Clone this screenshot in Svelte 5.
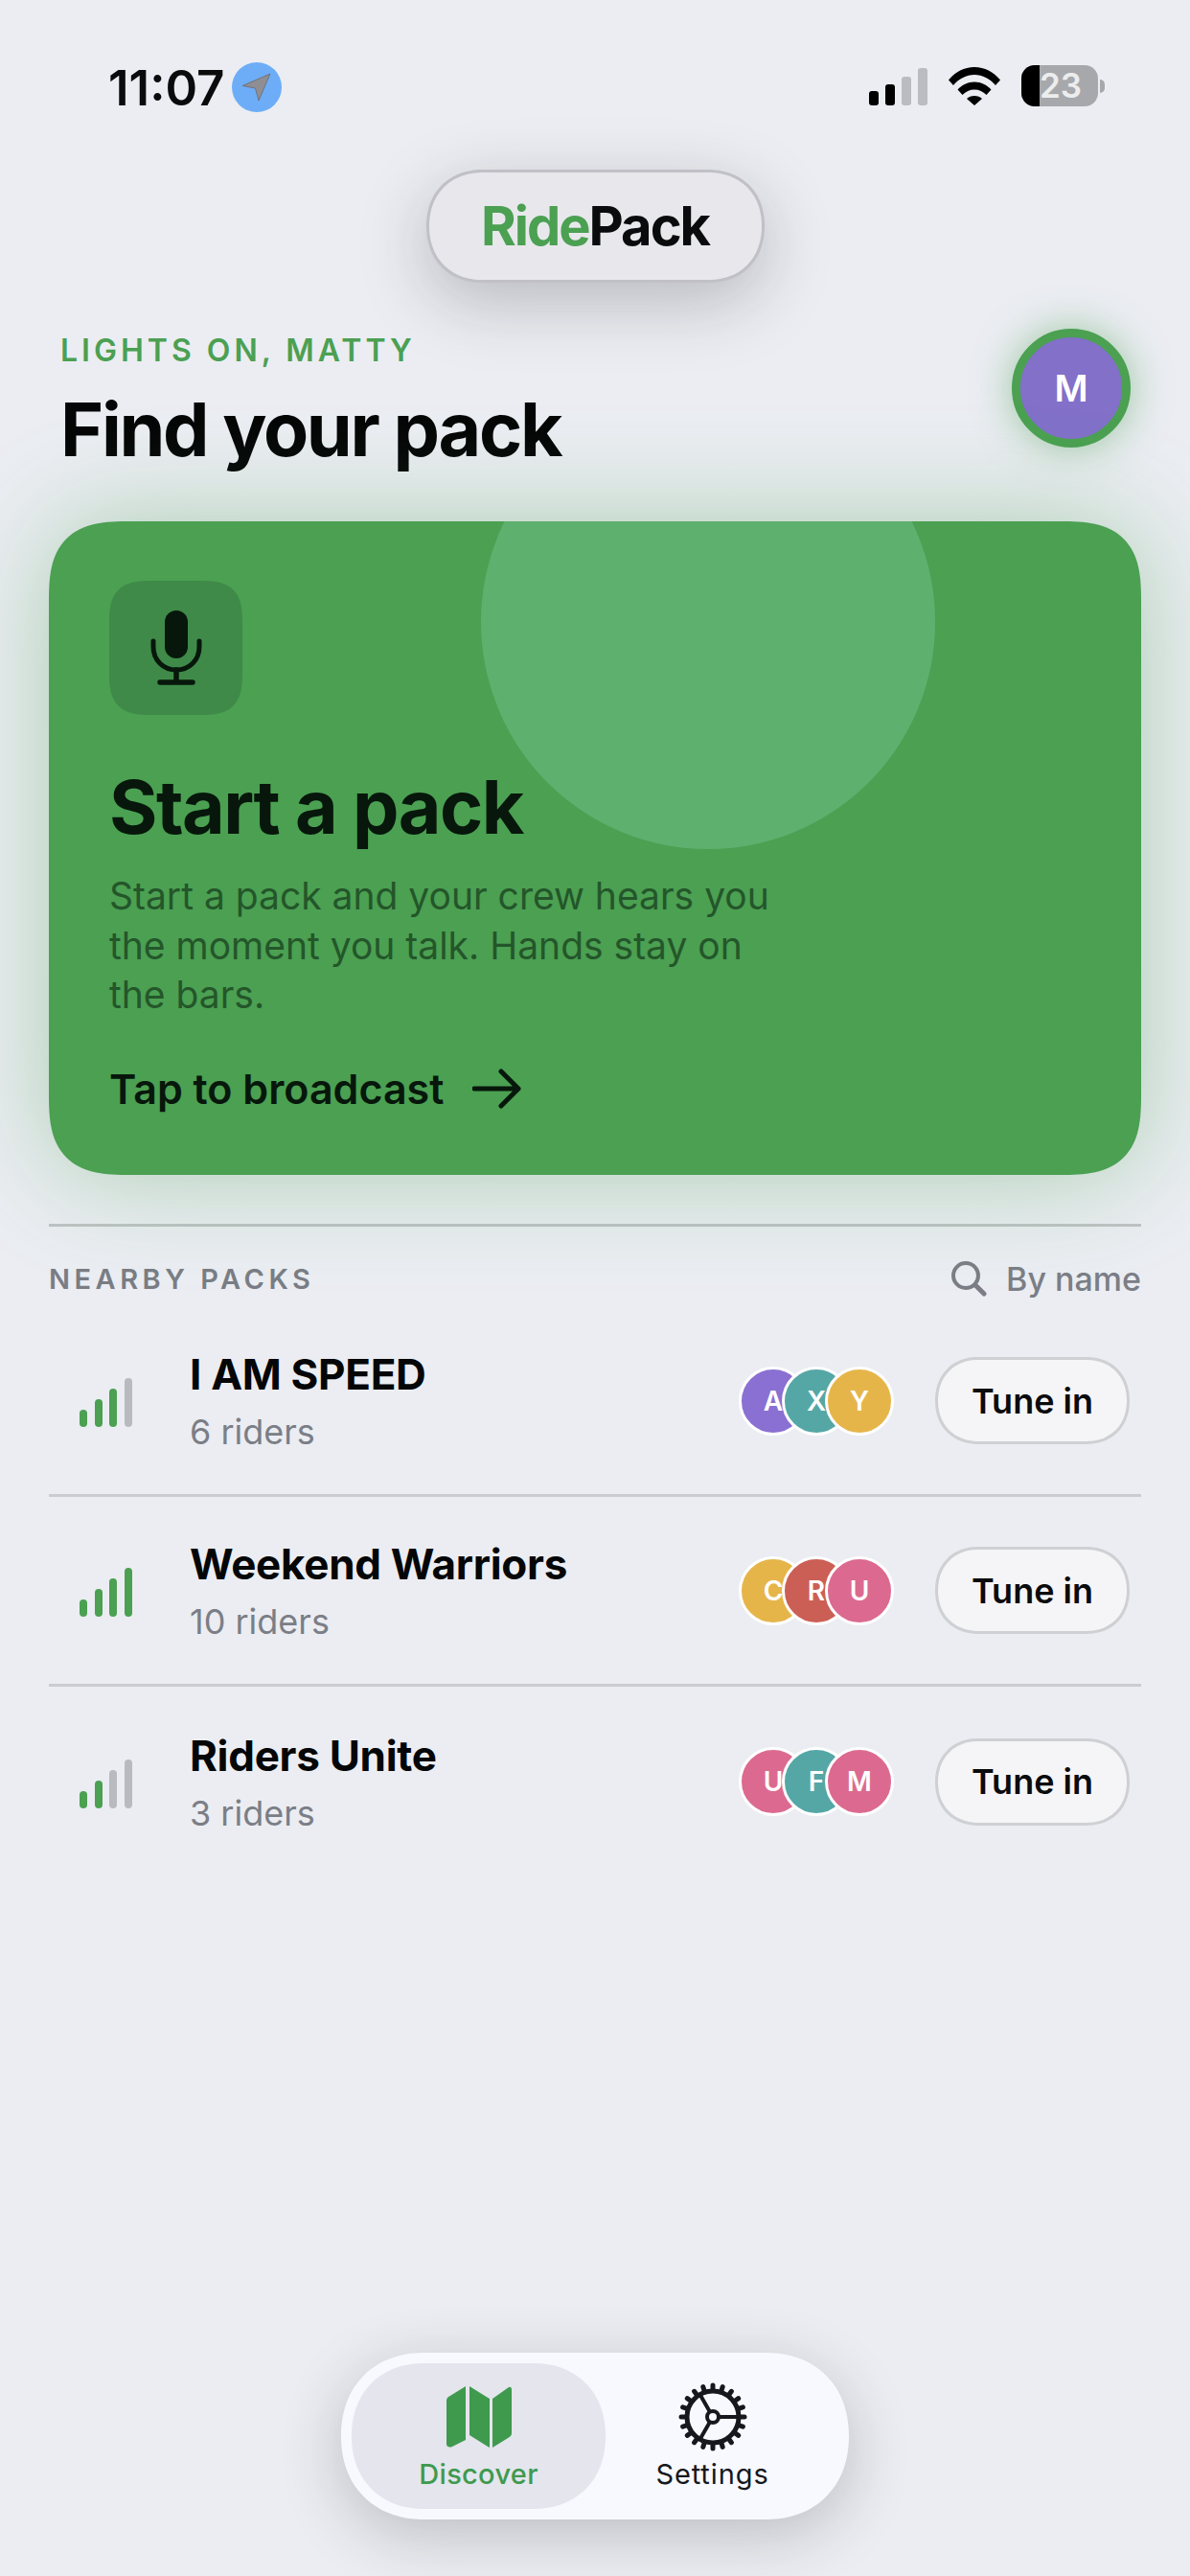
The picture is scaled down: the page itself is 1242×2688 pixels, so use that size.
<script lang="ts">
  type Pack = { name: string; riders: string; level: number; faces: { l: string; c: string }[] };

  const purple = '#8a70d2';
  const teal = '#55a7a6';
  const yellow = '#e6b54a';
  const red = '#cc5f55';
  const pink = '#dc6a90';

  const packs: Pack[] = [
    { name: 'I AM SPEED', riders: '6 riders', level: 3, faces: [{ l: 'A', c: purple }, { l: 'X', c: teal }, { l: 'Y', c: yellow }] },
    { name: 'Weekend Warriors', riders: '10 riders', level: 4, faces: [{ l: 'C', c: yellow }, { l: 'R', c: red }, { l: 'U', c: pink }] },
    { name: 'Riders Unite', riders: '3 riders', level: 2, faces: [{ l: 'U', c: pink }, { l: 'F', c: teal }, { l: 'M', c: pink }] },
  ];

  const teeth = Array.from({ length: 20 }, (_, i) => (i * 360) / 20);
</script>

<main class="page">
  <div class="status">
    <div class="clock">
      <span class="time">11:07</span>
      <span class="loc">
        <svg width="34" height="34" viewBox="0 0 34 34"><path d="M31 3 2 15.5l13.5 2.6L19 31z" fill="#8e8e93" stroke="#6f7480" stroke-width="1" stroke-linejoin="round" /></svg>
      </span>
    </div>
    <div class="sys">
      <div class="cell">
        <i class="on" style="height:15px"></i>
        <i class="on" style="height:22px"></i>
        <i style="height:30px"></i>
        <i style="height:39px"></i>
      </div>
      <svg class="wifi" width="54" height="40" viewBox="0 0 54 40">
        <path d="M0 13.5C7 5 16.500 0 27 0s20 5 27 13.500l-5 5.500C43 12 35.500 8 27 8S11 12 5 19z" fill="#000" />
        <path d="M9.500 23.500C14 18.500 20 15.500 27 15.500s13 3 17.500 8l-5 5.500C36 25.500 31.800 23.500 27 23.500S18 25.500 14.500 29z" fill="#000" />
        <path d="M19 33c2-2 4.800-3 8-3s6 1 8 3l-8 7z" fill="#000" />
      </svg>
      <div class="batt">
        <div class="batt-body"><span class="batt-fill"></span><span class="batt-num">23</span></div>
        <span class="nub"></span>
      </div>
    </div>
  </div>

  <div class="logo-row">
    <div class="logo"><span class="ride">Ride</span>Pack</div>
  </div>

  <header class="hero">
    <div>
      <div class="eyebrow">LIGHTS ON, MATTY</div>
      <h1>Find your pack</h1>
    </div>
    <div class="me">M</div>
  </header>

  <section class="card">
    <span class="blob"></span>
    <div class="mic">
      <svg width="54" height="78" viewBox="0 0 54 78" fill="none">
        <rect x="15" y="0" width="24" height="50" rx="12" fill="#07170b" />
        <path d="M3 32v6c0 14 10.500 24 24 24s24-10 24-24v-6" stroke="#07170b" stroke-width="5" stroke-linecap="round" />
        <path d="M27 62v13M10 75h34" stroke="#07170b" stroke-width="5.500" stroke-linecap="round" />
      </svg>
    </div>
    <h2>Start a pack</h2>
    <p>Start a pack and your crew hears you<br />the moment you talk. Hands stay on<br />the bars.</p>
    <div class="cta">
      <span>Tap to broadcast</span>
      <svg width="52" height="42" viewBox="0 0 52 42" fill="none">
        <path d="M2 21h46M30 3l18 18-18 18" stroke="#07170b" stroke-width="5" stroke-linecap="round" stroke-linejoin="round" />
      </svg>
    </div>
  </section>

  <section class="nearby">
    <div class="nearby-head">
      <span class="label">NEARBY PACKS</span>
      <span class="search">
        <svg width="38" height="38" viewBox="0 0 38 38" fill="none">
          <circle cx="16" cy="16" r="13" stroke="#7b7e86" stroke-width="4" />
          <path d="M26 26l9 9" stroke="#7b7e86" stroke-width="5" stroke-linecap="round" />
        </svg>
        By name
      </span>
    </div>

    {#each packs as p (p.name)}
      <div class="row">
        <div class="bars">
          {#each [18, 29, 40, 51] as h, i}
            <i class:lit={i < p.level} style="height:{h}px"></i>
          {/each}
        </div>
        <div class="info">
          <div class="name">{p.name}</div>
          <div class="riders">{p.riders}</div>
        </div>
        <div class="faces">
          {#each p.faces as f}
            <span class="face" style="background:{f.c}">{f.l}</span>
          {/each}
        </div>
        <button class="tune">Tune in</button>
      </div>
    {/each}
  </section>

  <nav class="tabs">
    <div class="tab active">
      <svg width="68" height="64" viewBox="0 0 68 64" fill="#3f9a4e">
        <path d="M20 0v56L5 63.500Q0 64 0 60V15q0-3 3-4.500z" />
        <path d="M24 0l21 13v51L24 51z" />
        <path d="M48 13 65 1q3-1 3 3v45q0 3-3 4.500L48 64z" />
      </svg>
      <span>Discover</span>
    </div>
    <div class="tab settings">
      <svg width="72" height="72" viewBox="-36 -36 72 72" fill="none" stroke="#16181d">
        {#each teeth as a}
          <rect x="-2.500" y="-35.500" width="5" height="9" rx="2.500" fill="#16181d" stroke="none" transform="rotate({a})" />
        {/each}
        <circle r="27" stroke-width="5" />
        <circle r="6" stroke-width="4" />
        <path d="M7 0h20M-3.500 -6-13.500 -23.400M-3.500 6-13.500 23.400" stroke-width="4" />
      </svg>
      <span>Settings</span>
    </div>
  </nav>
</main>

<style>
  :global(body) { margin: 0; background: #ebedf2; }
  .page { position: relative; width: 1242px; height: 2688px; overflow: hidden; display: flex; flex-direction: column; background: #ebedf2; font-family: Inter, 'Noto Sans', sans-serif; color: #0a0b0d; }

  .status { height: 177px; flex-shrink: 0; box-sizing: border-box; padding: 65px 89px 0 113px; display: flex; justify-content: space-between; align-items: flex-start; }
  .clock { display: flex; align-items: center; gap: 8px; height: 52px; }
  .time { font-size: 51px; font-weight: 600; }
  .loc { width: 52px; height: 52px; border-radius: 50%; background: #6dadf8; display: grid; place-items: center; }
  .sys { display: flex; align-items: flex-end; gap: 22px; padding-top: 5px; }
  .cell { display: flex; align-items: flex-end; gap: 7px; height: 40px; }
  .cell i { width: 10px; border-radius: 3px; background: #bbbcc1; }
  .cell i.on { background: #000; }
  .batt { display: flex; align-items: center; gap: 2px; margin-bottom: -1px; margin-top: -2px; }
  .batt-body { position: relative; width: 80px; height: 43px; border-radius: 14px; background: #a7a8ac; text-align: center; }
  .batt-fill { position: absolute; left: 0; top: 0; bottom: 0; width: 19px; background: #000; border-radius: 14px 0 0 14px; }
  .batt-num { position: relative; display: block; margin-left: 2px; font-size: 35px; line-height: 43px; font-weight: 600; color: #eceded; }
  .nub { width: 5px; height: 14px; border-radius: 0 7px 7px 0; background: #a7a8ac; }

  .logo-row { display: flex; justify-content: center; flex-shrink: 0; }
  .logo { width: 353px; height: 118px; box-sizing: border-box; border: 3px solid #c0c0c6; border-radius: 59px; corner-shape: superellipse(1.12); background: #e8e8ec; box-shadow: 0 20px 70px rgba(40, 40, 48, 0.26); display: flex; align-items: center; justify-content: center; font-size: 56px; font-weight: 700; letter-spacing: -2px; color: #0a0b0d; }
  .ride { color: #4ba052; }

  .hero { display: flex; justify-content: space-between; padding: 48px 62px 0 63px; flex-shrink: 0; height: 249px; box-sizing: border-box; }
  .eyebrow { margin-top: 3px; font-size: 32px; line-height: 40px; font-weight: 600; letter-spacing: 4px; color: #4ba052; }
  h1 { margin: 17px 0 0; font-size: 77px; line-height: 90px; font-weight: 700; letter-spacing: -2.300px; color: #050607; }
  .me { width: 124px; height: 124px; box-sizing: border-box; border: 9px solid #4ba052; border-radius: 50%; background: #8270c9; color: #fff; display: grid; place-items: center; font-size: 38px; font-weight: 600; box-shadow: 0 0 40px rgba(75, 160, 82, 0.5); }

  .card { position: relative; flex-shrink: 0; margin: 0 51px; height: 682px; box-sizing: border-box; padding: 62px 63px 0; border-radius: 84px; corner-shape: superellipse(1.5); background: #4ba052; box-shadow: 0 0 110px rgba(75, 160, 82, 0.4); }
  .blob { position: absolute; left: 451px; top: -132px; width: 474px; height: 474px; border-radius: 50%; background: #5eb06f; clip-path: inset(132px 0 0 0); }
  .mic { position: relative; width: 139px; height: 140px; border-radius: 44px; corner-shape: superellipse(1.5); background: #3f8a48; display: grid; place-items: center; }
  h2 { position: relative; margin: 51px 0 0; font-size: 77px; line-height: 90px; font-weight: 700; letter-spacing: -1.500px; color: #07170b; }
  .card p { position: relative; margin: 22px 0 0; font-size: 39px; line-height: 51.500px; color: #24562a; }
  .cta { position: relative; display: flex; align-items: center; gap: 30px; margin-top: 46px; font-size: 43px; font-weight: 600; color: #07170b; }

  .nearby { margin: 51px 51px 0; border-top: 3px solid #bfc3c5; flex-shrink: 0; }
  .nearby-head { display: flex; justify-content: space-between; align-items: center; height: 84px; padding-top: 24px; box-sizing: border-box; }
  .label { font-size: 29px; font-weight: 600; letter-spacing: 4.500px; color: #7a7d85; }
  .search { display: flex; align-items: center; gap: 20px; font-size: 34px; font-weight: 500; color: #7b7e86; }

  .row { height: 198px; box-sizing: border-box; border-bottom: 3px solid #cbccd1; display: flex; align-items: center; padding: 0 12px 0 32px; }
  .row:last-child { border-bottom: 0; }
  .bars { width: 115px; display: flex; align-items: flex-end; gap: 7.500px; margin-top: 4px; }
  .bars i { width: 8px; border-radius: 4px; background: #b9bac0; }
  .bars i.lit { background: #4ba052; }
  .info { flex: 1; margin-top: 1px; }
  .name { font-size: 44px; line-height: 52px; font-weight: 700; letter-spacing: -0.300px; color: #050607; }
  .riders { margin-top: 12px; font-size: 36px; line-height: 44px; color: #7b7e86; }
  .faces { display: flex; margin-right: 43px; }
  .face { width: 72px; height: 72px; box-sizing: border-box; border: 3px solid #fff; border-radius: 50%; display: grid; place-items: center; color: #fff; font-size: 28px; font-weight: 600; margin-left: -27px; }
  .tune { width: 203px; height: 91px; box-sizing: border-box; border: 3px solid #cfd0d4; border-radius: 46px; corner-shape: superellipse(1.12); background: #f5f5f7; font: 600 36px Inter, sans-serif; color: #0a0b0d; padding: 0; }

  .tabs { margin: auto auto 59px; width: 530px; height: 174px; box-sizing: border-box; padding: 11px; border-radius: 87px; corner-shape: superellipse(1.12); background: #f8f9fe; box-shadow: 0 16px 64px rgba(40, 40, 48, 0.24); display: flex; flex-shrink: 0; }
  .tab { flex: 1; height: 152px; border-radius: 76px; display: flex; flex-direction: column; align-items: center; justify-content: flex-start; padding-top: 20px; box-sizing: border-box; font-size: 29px; color: #16181d; }
  .tab svg { height: 72px; flex-shrink: 0; margin-bottom: 6px; }
  .tab.settings { padding-right: 20px; font-weight: 400; letter-spacing: 0.900px; }
  .tab.active { flex: 0 0 265px; corner-shape: superellipse(1.12); background: #e4e5ed; color: #3f9a4e; font-weight: 500; letter-spacing: 0.300px; }
</style>
